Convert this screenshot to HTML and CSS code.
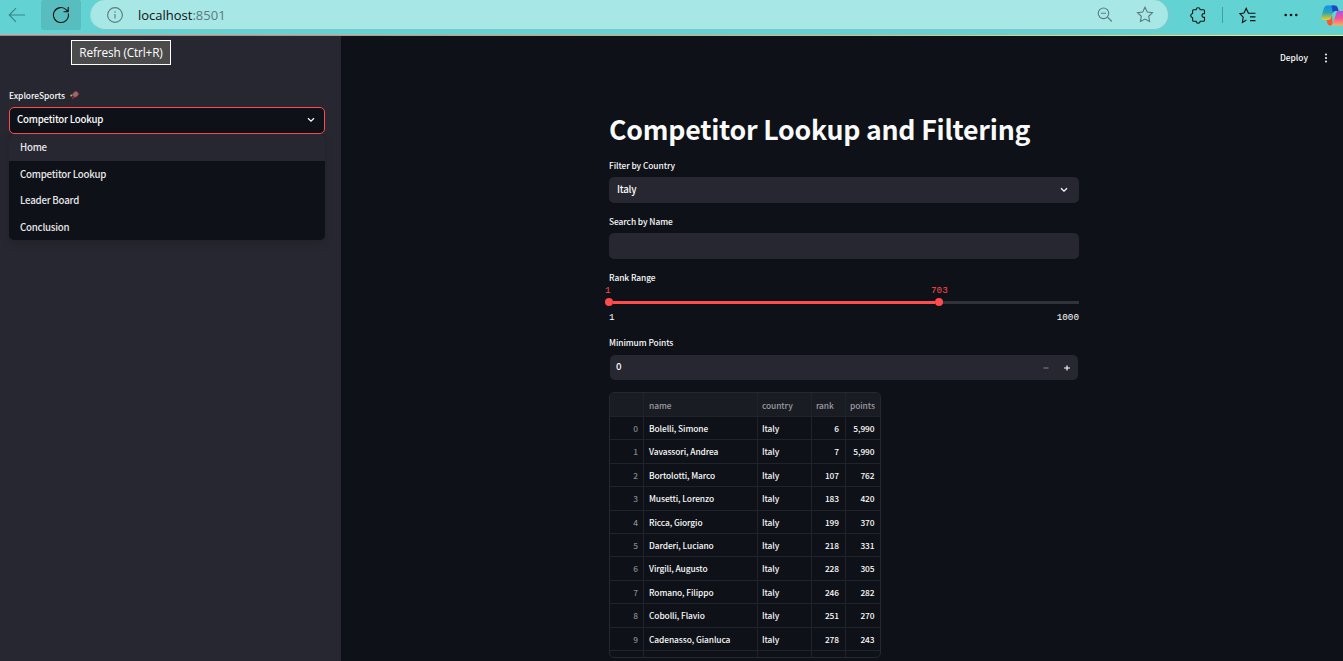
FILE: index.html
```html
<!DOCTYPE html>
<html lang="en">
<head>
<meta charset="utf-8">
<title>ExploreSports</title>
<link rel="stylesheet" href="styles.css">
</head>
<body>
<header class="browser">
  <svg class="back" width="18" height="16" viewBox="0 0 18 16"><path d="M17 8H1.5M8 1.2 1.2 8 8 14.8"/></svg>
  <span class="reload">
    <svg width="18" height="18" viewBox="0 0 18 18"><path d="M16.300 7.500A7.500 7.500 0 1 1 14.500 4L16 5.500M16.200 1v4.700h-4.700"/></svg>
    <span class="tooltip">Refresh (Ctrl+R)</span>
  </span>
  <div class="address">
    <svg class="info" width="16" height="16" viewBox="0 0 16 16"><circle cx="8" cy="8" r="7.400"/><path d="M8 7v4.500M8 4.300v1.400"/></svg>
    <span class="url">localhost<span class="port">:8501</span></span>
    <svg class="magnifier" width="16" height="16" viewBox="0 0 16 16"><circle cx="6.500" cy="6.300" r="5.300"/><path d="M4 6.300h5M10.500 10.200l4.300 4.300"/></svg>
    <svg class="star" width="18" height="17" viewBox="0 0 18 17"><path d="M9 1.200l2.300 4.800 5.200.7-3.800 3.600.9 5.300L9 13.100l-4.600 2.500.9-5.300L1.500 6.700l5.200-.7z"/></svg>
  </div>
  <svg class="ext" width="17" height="17" viewBox="0 0 17 17"><path d="M3.600 2.700h2.500c.2-1.300 1-1.900 2-1.900s1.900.6 2.100 1.900h3.300q1 0 1 1v2.900c-1.500-.2-2.500.6-2.500 1.900s1 2 2.500 1.800v3q0 1-1 1h-3.300c-.2 1.300-1 1.900-2 1.900s-1.900-.6-2.100-1.900H3.600q-1 0-1-1v-2.600C1.300 10.500.7 9.600.7 8.600s.7-1.800 1.900-2.100V3.700q0-1 1-1z"/></svg>
  <span class="divider"></span>
  <svg class="favs" width="18" height="17" viewBox="0 0 18 17"><path d="M10.500 6.200H9.400L7.200 1.400 5 6 1 6.700l3.200 3.500-.8 5.200 4-2.300M10.500 6.200h6M11 9.900h5.500M11 13.600h5.500M7.200 1.400l2.300 4.800"/></svg>
  <svg class="more" width="14" height="4" viewBox="0 0 14 4"><circle cx="1.700" cy="2" r="1.300"/><circle cx="7" cy="2" r="1.300"/><circle cx="12.300" cy="2" r="1.300"/></svg>
  <svg class="copilot" width="22" height="21" viewBox="0 0 22 21">
    <defs>
      <linearGradient id="cool" x1="0" y1="0" x2="0" y2="1"><stop offset="0" stop-color="#128ef0"/><stop offset=".5" stop-color="#2ba7b5"/><stop offset="1" stop-color="#f5cf16"/></linearGradient>
      <linearGradient id="warm" x1="0" y1="0" x2="0" y2="1"><stop offset="0" stop-color="#b052df"/><stop offset=".5" stop-color="#f4529a"/><stop offset="1" stop-color="#ffb04d"/></linearGradient>
    </defs>
    <path fill="url(#cool)" d="M6 .5h8L10 13q-.7 2-2.500 2H3q-3.300 0-2.600-3.500L3 3Q3.800.5 6 .5z"/>
    <path fill="#1b48c9" d="M10.500.5H14q2 0 2.700 2.200l1 3.300h-3.500q-1.700 0-2.300 2z"/>
    <path fill="#f15a3a" d="M5.500 15h2q2 0 2.600-2l1-3 .5 8-1 2.500H9q-2 0-2.500-2z"/>
    <path fill="url(#warm)" d="M16.500 6H22v14.500H9.500q2 0 2.600-2L15.300 8q.4-1.500 1.200-2z"/>
  </svg>
</header>

<div class="app">
  <aside class="sidebar">
    <div class="label side-label">ExploreSports
      <svg width="9" height="9" viewBox="0 0 9 9"><path d="M3.500 6 2.300 8.200" stroke="#b32d42" stroke-width="1"/><ellipse cx="5.500" cy="3.300" rx="3" ry="2.500" transform="rotate(-40 5.500 3.300)" fill="#86737d" stroke="#b32d42" stroke-width=".9"/><circle cx="1.300" cy="4.500" r="1" fill="#a6c63c"/></svg>
    </div>
    <div class="select active">
      <span>Competitor Lookup</span>
      <svg class="chev" width="8" height="6" viewBox="0 0 8 6"><path d="M1 1.200l3 3 3-3"/></svg>
      <ul class="menu">
        <li class="hover">Home</li>
        <li>Competitor Lookup</li>
        <li>Leader Board</li>
        <li>Conclusion</li>
      </ul>
    </div>
  </aside>

  <main class="main">
    <div class="toolbar">
      <span>Deploy</span>
      <svg width="4" height="10" viewBox="0 0 4 10"><circle cx="2" cy="1.400" r="1"/><circle cx="2" cy="5" r="1"/><circle cx="2" cy="8.600" r="1"/></svg>
    </div>
    <div class="content">
      <h1>Competitor Lookup and Filtering</h1>
      <div class="label">Filter by Country</div>
      <div class="select"><span>Italy</span><svg class="chev" width="8" height="6" viewBox="0 0 8 6"><path d="M1 1.200l3 3 3-3"/></svg></div>
      <div class="label">Search by Name</div>
      <div class="select"></div>
      <div class="label">Rank Range</div>
      <div class="slider">
        <div class="values"><span class="low">1</span><span class="high">703</span></div>
        <div class="track"><span class="thumb"></span><span class="fill"></span><span class="thumb"></span></div>
        <div class="bounds"><span>1</span><span>1000</span></div>
      </div>
      <div class="label">Minimum Points</div>
      <div class="number"><span class="amount">0</span><svg width="6" height="6" viewBox="0 0 6 6"><path d="M.5 3h5" stroke="#85868c"/></svg><svg width="6" height="6" viewBox="0 0 6 6"><path d="M0 3h6M3 .5v5" stroke="#fafafa" stroke-width="1.200"/></svg></div>
      <div class="table">
        <div class="row head"><span></span><span>name</span><span>country</span><span>rank</span><span>points</span></div>
        <div class="row"><span>0</span><span>Bolelli, Simone</span><span>Italy</span><span>6</span><span>5,990</span></div>
        <div class="row"><span>1</span><span>Vavassori, Andrea</span><span>Italy</span><span>7</span><span>5,990</span></div>
        <div class="row"><span>2</span><span>Bortolotti, Marco</span><span>Italy</span><span>107</span><span>762</span></div>
        <div class="row"><span>3</span><span>Musetti, Lorenzo</span><span>Italy</span><span>183</span><span>420</span></div>
        <div class="row"><span>4</span><span>Ricca, Giorgio</span><span>Italy</span><span>199</span><span>370</span></div>
        <div class="row"><span>5</span><span>Darderi, Luciano</span><span>Italy</span><span>218</span><span>331</span></div>
        <div class="row"><span>6</span><span>Virgili, Augusto</span><span>Italy</span><span>228</span><span>305</span></div>
        <div class="row"><span>7</span><span>Romano, Filippo</span><span>Italy</span><span>246</span><span>282</span></div>
        <div class="row"><span>8</span><span>Cobolli, Flavio</span><span>Italy</span><span>251</span><span>270</span></div>
        <div class="row"><span>9</span><span>Cadenasso, Gianluca</span><span>Italy</span><span>278</span><span>243</span></div>
        <div class="row"><span></span><span></span><span></span><span></span><span></span></div>
      </div>
    </div>
  </main>
</div>
</body>
</html>
```
FILE: styles.css
```css
* { box-sizing: border-box; }
body {
  margin: 0;
  height: 661px;
  overflow: hidden;
  display: flex;
  flex-direction: column;
  background: #0e1117;
  color: #fafafa;
  font-family: "Noto Sans CJK SC", "Noto Sans", sans-serif;
  font-size: 9.700px;
  font-weight: 500;
}
svg { display: block; flex: none; fill: none; }

/* Browser chrome */
.browser {
  height: 36px;
  flex: none;
  display: flex;
  align-items: center;
  padding: 0 0 6px 8px;
  background: linear-gradient(90deg, #ef6560, #f0a070 50%, #eeee88) bottom / 100% 1px no-repeat, #62d2d2;
  font-family: "Open Sans", "Noto Sans", sans-serif;
  font-weight: 400;
}
.browser svg { stroke: #111; stroke-width: 1.1; }
.browser .back { stroke: #3b8487; }
.reload {
  position: relative;
  width: 40px;
  height: 30px;
  margin-left: 15px;
  display: flex;
  align-items: center;
  justify-content: center;
  border-radius: 3px;
  background: #58bdbe;
}
.tooltip {
  position: absolute;
  z-index: 2;
  left: 30px;
  top: 40px;
  width: 100px;
  height: 25px;
  border: 1px solid #fff;
  background: #4b4b4b;
  color: #fff;
  font-size: 11.800px;
  letter-spacing: -.15px;
  line-height: 23px;
  text-align: center;
  white-space: nowrap;
}
.address {
  width: 1080px;
  height: 30px;
  margin-left: 9px;
  padding: 0 14px 0 16px;
  display: flex;
  align-items: center;
  border: 1px solid #85c4c3;
  border-top: 0;
  border-left-color: #93dddd;
  border-radius: 15px;
  background: #a7e7e5;
}
.address svg { stroke: #5b7c7c; }
.url { margin-left: 15px; font-size: 13px; line-height: 20px; color: #111; }
.port { color: #5a7b7b; }
.magnifier { margin-left: auto; }
.star { margin-left: 23px; }
.ext { margin-left: 21px; }
.divider { width: 1px; height: 16px; margin-left: 15px; background: #429fa0; }
.favs { margin-left: 16px; }
.browser .more { margin-left: 27px; fill: #111; stroke: none; }
.browser .copilot { margin-left: 23px; stroke: none; }

/* App */
.app { flex: 1; min-height: 0; display: flex; }
.sidebar { width: 341px; flex: none; padding: 52px 16px 0 9px; background: #262730; }
.main { flex: 1; padding-right: 15px; }

.label { height: 14px; line-height: 14px; font-size: 8.400px; letter-spacing: -.06px; white-space: nowrap; }
.side-label { display: flex; align-items: center; gap: 5px; margin-bottom: 5px; letter-spacing: 0; }
.select {
  position: relative;
  height: 26px;
  margin: 5px 0 11px;
  padding: 0 11px 0 8px;
  display: flex;
  align-items: center;
  justify-content: space-between;
  border-radius: 5px;
  background: #262730;
  letter-spacing: -.22px;
}
.select.active { height: 27px; margin: 0; padding: 0 9px 0 7px; border: 1px solid #ff4b4b; background: #0e1117; }
.select span { line-height: 20px; margin-top: -2px; }
.select.active span { margin-top: -3px; }
.active .chev { margin-top: -1px; }
.chev { stroke: #fafafa; stroke-width: 1.300; }
.menu {
  position: absolute;
  left: -1px;
  right: -1px;
  top: 26px;
  margin: 0;
  padding: 0;
  list-style: none;
  overflow: hidden;
  border-radius: 5px;
  background: #0e1117;
  box-shadow: 0 3px 10px rgba(0, 0, 0, .16);
  color: #e6e6e8;
}
.menu li { height: 26.600px; padding-left: 11px; line-height: 26.600px; }
.menu .hover { background: #262730; }

.toolbar { height: 44px; display: flex; align-items: center; justify-content: flex-end; gap: 16px; font-size: 8.400px; line-height: 14px; }
.toolbar span { margin-top: -2px; }
.toolbar svg { fill: #fafafa; }
.content { width: 470px; margin-left: 268px; }
h1 { margin: 28px 0 8px; height: 42px; font-size: 26.700px; line-height: 42px; font-weight: 700; letter-spacing: -.23px; white-space: nowrap; }

/* Range slider */
.slider { height: 40px; margin-bottom: 11px; font: 9.300px/12px "Liberation Mono", monospace; }
.values { height: 14px; padding-top: 1px; display: flex; color: #ff4b4b; }
.low { width: 326px; margin-left: -4px; }
.track {
  height: 8px;
  margin-left: -4px;
  display: flex;
  align-items: center;
  background: linear-gradient(#31333b, #31333b) right center / 140px 3px no-repeat;
}
.thumb { width: 8px; height: 8px; border-radius: 50%; background: #ff4b4b; }
.fill { width: 322px; height: 3px; background: #ff4b4b; }
.bounds { display: flex; justify-content: space-between; margin-top: 6px; }

.number { height: 25px; margin: 6px 1px 12px; padding: 0 8px 0 6px; display: flex; align-items: center; gap: 15px; border-radius: 5px; background: #262730; }
.amount { margin-right: auto; line-height: 20px; margin-top: -3px; }

/* Data grid */
.table { width: 272px; height: 266px; border: 1px solid #26282e; border-radius: 5px; overflow: hidden; font-size: 8.400px; letter-spacing: -.08px; }
.row { height: 23.400px; display: grid; grid-template-columns: 34px 114px 54px 34px 34px; border-bottom: 1px solid #202329; line-height: 22.600px; }
.row span { padding: 0 5px; border-right: 1px solid #202329; white-space: nowrap; }
.row span:nth-child(n+3) { padding-left: 4px; }
.row span:last-child { border-right: 0; padding-right: 5.500px; }
.row span:first-child { text-align: right; color: #85868c; }
.row span:nth-child(n+4) { text-align: right; }
.row span:nth-child(4) { padding-right: 6px; }
.row.head { height: 24px; background: #1a1c24; color: #9a9ba1; line-height: 24px; }
.row.head span:nth-child(n+4) { text-align: left; }
```
